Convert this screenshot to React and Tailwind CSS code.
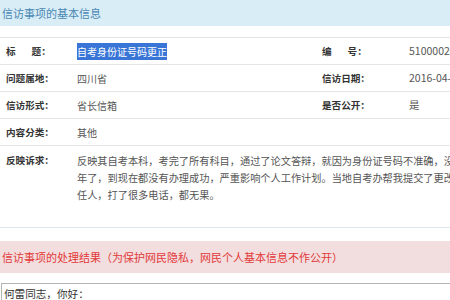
import React from 'react';

const font = { fontFamily: '"Noto Sans CJK SC", "Liberation Sans", sans-serif' };

const Row = ({ label, value, rLabel, rValue }) => (
  <div className="flex h-[27px] items-center border-b border-[#e6e6e6]">
    <div className="w-[71px] pl-[6px] text-[9.6px] font-bold text-[#333]">{label}</div>
    <div className="w-[245px] pl-[6px] text-[10px] text-[#555]">{value}</div>
    <div className="w-[87px] pl-[6px] text-[9.6px] font-bold text-[#333]">{rLabel}</div>
    <div className="flex-1 pl-[6px] text-[10.5px] text-[#555]">{rValue}</div>
  </div>
);

export default function App() {
  return (
    <div className="w-[450px] h-[300px] overflow-hidden bg-white" style={font}>
      <div className="w-[620px]">

        {/* 基本信息 header */}
        <div className="h-[26px] flex items-center bg-[#d9edf7] pl-[2px] text-[11px] text-[#4a88b2]">
          信访事项的基本信息
        </div>

        {/* info table */}
        <div className="mt-[11px] border-t border-[#e3e3e3]">
          <Row
            label={<span>标<span className="ml-[16px]">题：</span></span>}
            value={<span className="bg-[#3875d7] text-white py-[1px]">自考身份证号码更正</span>}
            rLabel={<span>编<span className="ml-[16px]">号：</span></span>}
            rValue="51000020160412"
          />
          <Row label="问题属地：" value="四川省" rLabel="信访日期：" rValue="2016-04-12" />
          <Row label="信访形式：" value="省长信箱" rLabel="是否公开：" rValue="是" />
          <Row label="内容分类：" value="其他" rLabel="" rValue="" />

          <div className="flex h-[82px] pt-[6px] border-b border-[#d8e6ee]">
            <div className="w-[71px] pl-[6px] text-[9.6px] leading-[17px] font-bold text-[#333]">反映诉求：</div>
            <div className="flex-1 pl-[6px] text-[10.2px] leading-[17px] text-[#555] whitespace-nowrap">
              <div>反映其自考本科，考完了所有科目，通过了论文答辩，就因为身份证号码不准确，没有办法拿到毕业证</div>
              <div>年了，到现在都没有办理成功，严重影响个人工作计划。当地自考办帮我提交了更改申请，却找不到责</div>
              <div>任人，打了很多电话，都无果。</div>
            </div>
          </div>
        </div>

        {/* 处理结果 header */}
        <div className="mt-[13px] h-[32px] flex items-center bg-[#f2dede] pl-[2px] text-[11px] text-[#e23a3a]">
          信访事项的处理结果（为保护网民隐私，网民个人基本信息不作公开）
        </div>

        {/* reply box */}
        <div className="mt-[10px] ml-[1px] border-t border-l border-[#b5b5b5] pl-[2px] pt-[2px] text-[10.6px] text-[#333]">
          何雷同志，你好：
        </div>
      </div>
    </div>
  );
}
